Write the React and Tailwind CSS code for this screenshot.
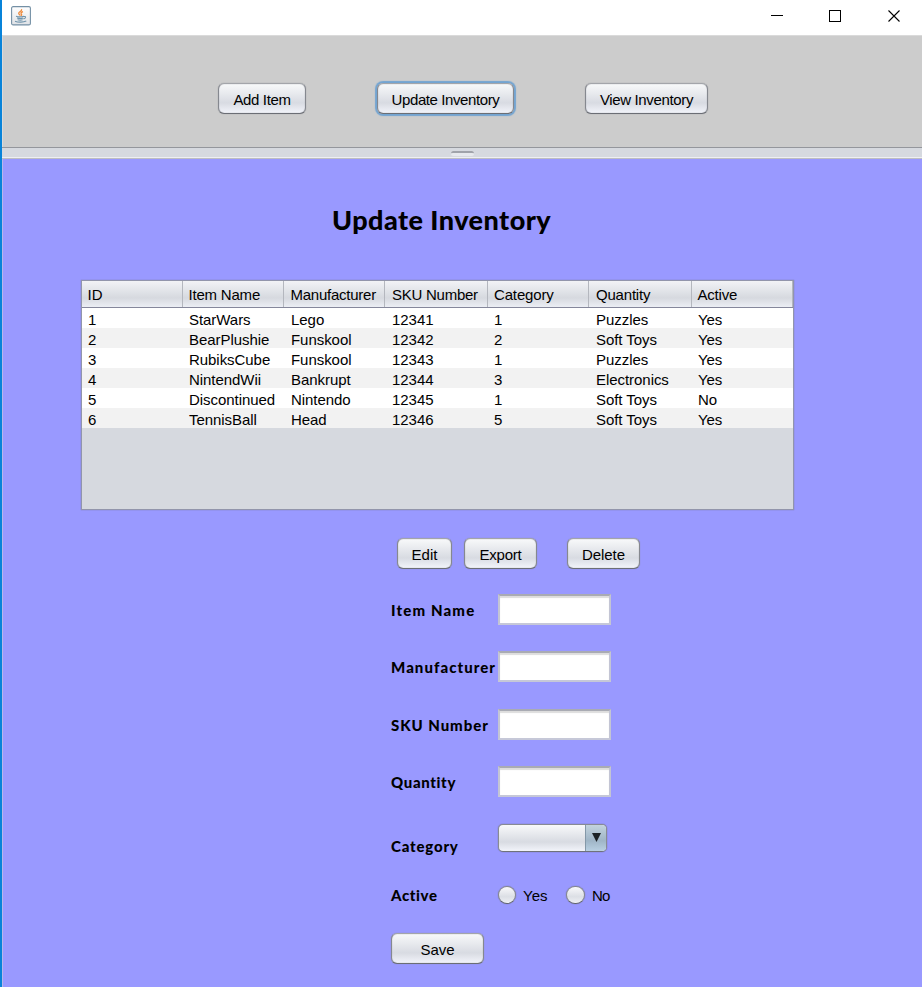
import React from "react";

const face =
  "bg-linear-to-b from-[#f8f9fa] via-[#d8dbe2] via-65% to-[#f2f4fa]";

const columns = [
  { name: "ID", head: "pl-[5.500px]" },
  { name: "Item Name", head: "pl-[5.500px] tracking-[-0.2px]" },
  { name: "Manufacturer", head: "pl-[6.500px] tracking-[-0.25px]" },
  { name: "SKU Number", head: "pl-[7px] tracking-[-0.25px]" },
  { name: "Category", head: "pl-[6px] tracking-[-0.15px]" },
  { name: "Quantity", head: "pl-[7px] tracking-[-0.2px]" },
  { name: "Active", head: "pl-[5.500px] tracking-[-0.2px]" },
];

const rows = [
  ["1", "StarWars", "Lego", "12341", "1", "Puzzles", "Yes"],
  ["2", "BearPlushie", "Funskool", "12342", "2", "Soft Toys", "Yes"],
  ["3", "RubiksCube", "Funskool", "12343", "1", "Puzzles", "Yes"],
  ["4", "NintendWii", "Bankrupt", "12344", "3", "Electronics", "Yes"],
  ["5", "Discontinued", "Nintendo", "12345", "1", "Soft Toys", "No"],
  ["6", "TennisBall", "Head", "12346", "5", "Soft Toys", "Yes"],
];

function Button({ children, className = "", focused = false }) {
  return (
    <button
      className={`h-[31px] shrink-0 rounded-[6px] border border-t-[#a3a5aa] border-x-[#85888f] border-b-[#6b6e75] pt-[3px] leading-[24px] whitespace-nowrap ${face} ${
        focused
          ? "shadow-[0_0_1px_2px_#73a4d1,inset_0_0_1px_#85888f]"
          : "shadow-[0_0_1px_#80838a,inset_0_0_1px_#85888f]"
      } ${className}`}
    >
      {children}
    </button>
  );
}

function Label({ children, className = "" }) {
  return (
    <span
      className={`block w-[107px] shrink-0 font-['Lato'] text-[15px] leading-[20px] font-black whitespace-nowrap [font-variant-ligatures:none] ${className}`}
    >
      {children}
    </span>
  );
}

function Field() {
  return (
    <input className="h-[31px] w-[113px] border-2 border-t-[#a9abb3] border-x-[#c3c5d4] border-b-[#c6c8d8] bg-white shadow-[inset_0_2px_1px_#dddddd] outline-none" />
  );
}

function Radio({ className = "" }) {
  return (
    <span
      className={`block h-[18px] shrink-0 rounded-full border border-[#85878d] border-b-[#62656c] bg-linear-to-b from-[#f9f9fb] via-[#dcdfe5] via-60% to-[#eef0f5] shadow-[0_0_1px_#666] ${className}`}
    />
  );
}

function JavaIcon() {
  return (
    <svg width="20" height="20" viewBox="0 0 20 20" fill="none">
      <defs>
        <linearGradient id="tile" x1="0" y1="0" x2="0" y2="1">
          <stop offset="0" stopColor="#ffffff" />
          <stop offset="1" stopColor="#dfe2e6" />
        </linearGradient>
      </defs>
      <rect x=".6" y=".6" width="18.8" height="18.3" rx="1.5" fill="url(#tile)" stroke="#7490a5" strokeWidth="1.1" />
      <path d="M10.3 3.2c1.4 1.5-2.8 2.6-2.6 4.2.1 1 1.3 1.5 1.6 2.2M12 5.7c-1.8.6-2.6 1.4-1.6 2.4.5.6.2 1.2-.3 1.6" stroke="#ee8a3c" strokeWidth="1.3" />
      <path d="M5 10.300c2 .7 5.500 .7 8 0M6 12c2 .6 4.500 .6 6.300 0M6.600 13.700c1.700 .5 3.600 .5 5 0M12.800 10.500c2.300-.5 2.400 1.700-.2 2.500M4 15.200c3 1.300 8.500 1.200 11.300-.2" stroke="#6f93ab" strokeWidth="1.1" />
    </svg>
  );
}

export default function App() {
  return (
    <div className="flex h-[987px] w-[922px] overflow-hidden bg-white font-['Liberation_Sans',Arial,sans-serif] text-[15px] text-black">
      <div className="w-[2px] shrink-0 bg-[#0883d9]" />
      <div className="flex min-w-0 flex-1 flex-col">
        <header className="flex h-[35px] shrink-0 items-start bg-white pl-[9px]">
          <div className="pt-[6px]">
            <JavaIcon />
          </div>
          <svg className="mt-[10px] ml-[740px]" width="131" height="13" fill="none" stroke="#000" shapeRendering="crispEdges">
            <path d="M0 5.500H12M58.500 .500h11v11h-11z" />
            <path d="M117.500 .500l11 11M128.500 .500l-11 11" strokeWidth="1.100" shapeRendering="auto" />
          </svg>
        </header>

        <nav className="flex h-[112px] shrink-0 items-start border-t border-l border-[#dadada] bg-[#cccccc] pt-[47px] pl-[215px]">
          <Button className="w-[88px] tracking-[-0.35px]">Add Item</Button>
          <Button focused className="ml-[71px] w-[137px] tracking-[-0.4px]">Update Inventory</Button>
          <Button className="ml-[71px] w-[123px] tracking-[-0.35px]">View Inventory</Button>
        </nav>

        <div className="flex h-[12px] shrink-0 items-start border-t border-b border-t-[#94969c] border-b-[#bdbdc2] bg-[#d6d9df] pl-[449px] shadow-[inset_0_-1px_#eeeff2]">
          <div className="mt-[3px] h-[5px] w-[23px] rounded-[3px] border-t-2 border-t-[#a0a3aa] bg-[#e7e9ed]" />
        </div>

        <main className="flex flex-1 flex-col border-l border-[#b7b7e9] bg-[#9999ff]">
          <h1 className="mt-[43px] ml-[329px] font-['Lato'] text-[27px] leading-[36px] font-black tracking-[0.46px] whitespace-nowrap [font-variant-ligatures:none]">
            Update Inventory
          </h1>

          <section className="mt-[42px] ml-[78px] h-[230px] w-[713px] shrink-0 border border-[#9295ab] bg-[#d6d9df] shadow-[0_0_1px_#777a99]">
            <div className="grid h-[27px] grid-cols-[101px_101px_101px_103px_101px_103px_101px] border-b border-[#85879b] bg-linear-to-b from-[#f2f3f6] via-[#d6d9df] via-65% to-[#eceef4]">
              {columns.map((c) => (
                <div key={c.name} className={`border-r border-[#b4b7be] pt-[3px] leading-[22px] whitespace-nowrap ${c.head}`}>
                  {c.name}
                </div>
              ))}
            </div>
            {rows.map((row) => (
              <div
                key={row[0]}
                className="grid h-[20px] grid-cols-[101px_102px_101px_102px_102px_102px_101px] tracking-[-0.05px] odd:bg-[#f2f2f2] even:bg-white"
              >
                {row.map((cell, i) => (
                  <div key={i} className="pt-[1px] pl-[6px] leading-[22px] whitespace-nowrap">
                    {cell}
                  </div>
                ))}
              </div>
            ))}
          </section>

          <div className="mt-[28px] ml-[394px] flex">
            <Button className="w-[55px]">Edit</Button>
            <Button className="ml-[12px] w-[73px] tracking-[-0.2px]">Export</Button>
            <Button className="ml-[30px] w-[73px] tracking-[-0.1px]">Delete</Button>
          </div>

          <form className="ml-[388px] flex flex-col">
            <div className="mt-[25px] flex items-center">
              <Label className="tracking-[1.15px]">Item Name</Label>
              <Field />
            </div>
            <div className="mt-[26px] flex items-center">
              <Label className="tracking-[1.05px]">Manufacturer</Label>
              <Field />
            </div>
            <div className="mt-[27px] flex items-center">
              <Label className="tracking-[0.95px]">SKU Number</Label>
              <Field />
            </div>
            <div className="mt-[26px] flex items-center">
              <Label className="tracking-[0.65px]">Quantity</Label>
              <Field />
            </div>
            <div className="mt-[27px] flex items-start">
              <Label className="mt-[12px] tracking-[0.8px]">Category</Label>
              <div className={`flex h-[28px] w-[109px] overflow-hidden rounded-[5px] border border-[#888b93] border-b-[#6f727a] shadow-[0_0_1px_#555] ${face}`}>
                <div className="ml-auto flex w-[21px] items-start justify-center border-l border-[#8498a8] bg-linear-to-b from-[#c3d3de] via-[#9fb5c6] via-60% to-[#b9d0e2] pt-[8px]">
                  <svg width="9" height="9" viewBox="0 0 8 8">
                    <path d="M0 0h8L4 8z" fill="#1c2226" />
                  </svg>
                </div>
              </div>
            </div>
            <div className="mt-[29px] flex h-[20px] items-center">
              <Label className="tracking-[0.6px]">Active</Label>
              <Radio className="w-[18px]" />
              <span className="ml-[7px] w-[43px] pt-[2px] leading-[20px]">Yes</span>
              <Radio className="w-[19px]" />
              <span className="ml-[7px] pt-[2px] leading-[20px] tracking-[-0.8px]">No</span>
            </div>
            <Button className="mt-[28px] w-[93px] tracking-[-0.1px]">Save</Button>
          </form>
        </main>
      </div>
    </div>
  );
}
